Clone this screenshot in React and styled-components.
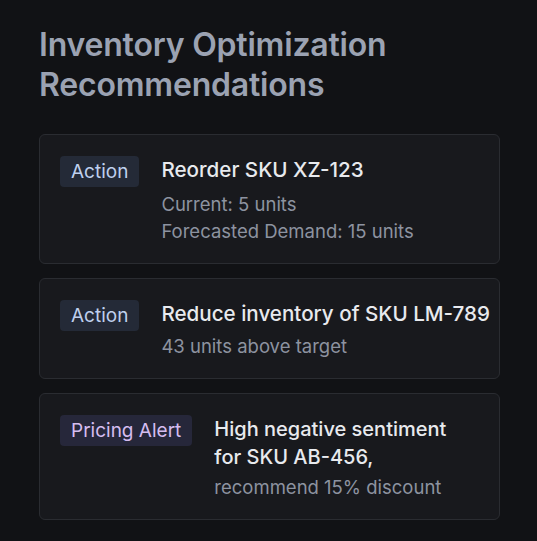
import React from "react"
import styled, { createGlobalStyle } from "styled-components"

const recommendations = [
  {
    tag: "Action",
    kind: "action",
    title: "Reorder SKU XZ-123",
    details: ["Current: 5 units", "Forecasted Demand: 15 units"],
    gap: 7,
  },
  {
    tag: "Action",
    kind: "action",
    title: "Reduce inventory of SKU LM-789",
    details: ["43 units above target"],
    gap: 5,
  },
  {
    tag: "Pricing Alert",
    kind: "pricing",
    title: "High negative sentiment for SKU AB-456,",
    details: ["recommend 15% discount"],
    gap: 3,
    narrow: true,
  },
]

export default function App() {
  return (
    <>
      <GlobalStyle />
      <Page>
        <Heading>Inventory Optimization Recommendations</Heading>
        <CardList>
          {recommendations.map((item, index) => (
            <Card key={index}>
              <Badge $kind={item.kind}>{item.tag}</Badge>
              <Body $narrow={item.narrow}>
                <Title $narrow={item.narrow}>{item.title}</Title>
                {item.details.map((line, i) => (
                  <Detail key={i} $gap={i === 0 ? item.gap : 0}>{line}</Detail>
                ))}
              </Body>
            </Card>
          ))}
        </CardList>
      </Page>
    </>
  )
}

const GlobalStyle = createGlobalStyle`
  body {
    margin: 0;
    background: #111215;
    font-family: Inter, "Noto Sans", sans-serif;
  }
`

const Page = styled.div`
  min-height: 541px;
  box-sizing: border-box;
  padding: 25px 37px 0 39px;
  background: #111215;
`

const Heading = styled.h1`
  margin: 0 0 29px;
  width: 400px;
  font-size: 32px;
  line-height: 40px;
  font-weight: 600;
  color: #9ba2b2;
  letter-spacing: -0.2px;
`

const CardList = styled.div`
  display: flex;
  flex-direction: column;
  gap: 14px;
`

const Card = styled.div`
  display: flex;
  align-items: flex-start;
  gap: 22px;
  padding: 21px 6px 18px 20px;
  background: #18191d;
  border: 1px solid #2a2c31;
  border-radius: 6px;
`

const Badge = styled.span`
  flex-shrink: 0;
  padding: 0 11px;
  height: 31px;
  line-height: 31px;
  border-radius: 4px;
  font-size: 19px;
  background: ${props => props.$kind === "pricing" ? "#26273a" : "#242a37"};
  color: ${props => props.$kind === "pricing" ? "#d5bdf0" : "#bfd0ee"};
`

const Body = styled.div`
  display: flex;
  flex-direction: column;
  max-width: ${props => props.$narrow ? "245px" : "none"};
`

const Title = styled.div`
  font-size: ${props => props.$narrow ? "20px" : "20.6px"};
  line-height: 28px;
  font-weight: 500;
  color: #e8eaee;
  white-space: ${props => props.$narrow ? "normal" : "nowrap"};
`

const Detail = styled.div`
  margin-top: ${props => props.$gap}px;
  font-size: 18.5px;
  line-height: 27px;
  color: #8d93a0;
`
